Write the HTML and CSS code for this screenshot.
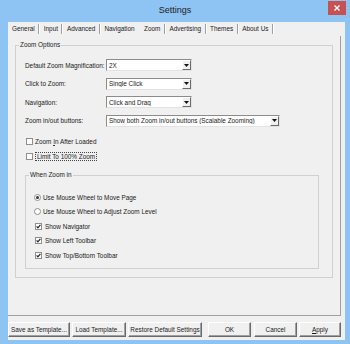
FILE: index.html
```html
<!DOCTYPE html>
<html lang="en">
<head>
  <meta charset="UTF-8">
  <title>Settings</title>
  <link rel="stylesheet" href="styles.css">
</head>
<body>
  <div class="window">
    <div class="titlebar">
      <span class="title">Settings</span>
      <span class="close">
        <svg width="6" height="6" viewBox="0 0 6 6"><path d="M0.5 0.5 L5.5 5.5 M5.5 0.5 L0.5 5.5" stroke="#fff" stroke-width="1.4"/></svg>
      </span>
    </div>

    <div class="client">
      <div class="tabs">
        <span class="tab">General</span><span class="sep"></span>
        <span class="tab">Input</span><span class="sep"></span>
        <span class="tab">Advanced</span><span class="sep"></span>
        <span class="tab">Navigation</span>
        <span class="tab active">Zoom</span><span class="sep"></span>
        <span class="tab">Advertising</span><span class="sep"></span>
        <span class="tab">Themes</span><span class="sep"></span>
        <span class="tab">About Us</span><span class="sep"></span>
      </div>

      <div class="panel">
        <fieldset class="group outer">
          <legend>Zoom Options</legend>

          <div class="field">
            <span class="field-label">Default Zoom Magnification:</span>
            <div class="combo"><span class="combo-value">2X</span><span class="combo-drop"><svg width="5" height="3" viewBox="0 0 5 3"><polygon points="0,0 5,0 2.5,3" fill="#111"/></svg></span></div>
          </div>
          <div class="field">
            <span class="field-label">Click to Zoom:</span>
            <div class="combo"><span class="combo-value">Single Click</span><span class="combo-drop"><svg width="5" height="3" viewBox="0 0 5 3"><polygon points="0,0 5,0 2.5,3" fill="#111"/></svg></span></div>
          </div>
          <div class="field">
            <span class="field-label">Navigation:</span>
            <div class="combo"><span class="combo-value">Click and Drag</span><span class="combo-drop"><svg width="5" height="3" viewBox="0 0 5 3"><polygon points="0,0 5,0 2.5,3" fill="#111"/></svg></span></div>
          </div>
          <div class="field">
            <span class="field-label">Zoom in/out buttons:</span>
            <div class="combo wide"><span class="combo-value">Show both Zoom in/out buttons (Scalable Zooming)</span><span class="combo-drop"><svg width="5" height="3" viewBox="0 0 5 3"><polygon points="0,0 5,0 2.5,3" fill="#111"/></svg></span></div>
          </div>

          <div class="checks">
            <div class="option"><span class="box"></span><span>Zoom <u>I</u>n After Loaded</span></div>
            <div class="option"><span class="box"></span><span class="focus">Limit To 100% Zoom</span></div>
          </div>

          <fieldset class="group inner">
            <legend>When Zoom in</legend>
            <div class="option"><span class="radio checked"></span><span>Use Mouse Wheel to Move Page</span></div>
            <div class="option"><span class="radio"></span><span>Use Mouse Wheel to Adjust Zoom Level</span></div>
            <div class="option"><span class="box"><svg width="5" height="5" viewBox="0 0 5 5"><path d="M0.6 2.4 L1.9 3.9 L4.4 0.9" stroke="#222" stroke-width="1.2" fill="none"/></svg></span><span>Show Navigator</span></div>
            <div class="option"><span class="box"><svg width="5" height="5" viewBox="0 0 5 5"><path d="M0.6 2.4 L1.9 3.9 L4.4 0.9" stroke="#222" stroke-width="1.2" fill="none"/></svg></span><span>Show Left Toolbar</span></div>
            <div class="option"><span class="box"><svg width="5" height="5" viewBox="0 0 5 5"><path d="M0.6 2.4 L1.9 3.9 L4.4 0.9" stroke="#222" stroke-width="1.2" fill="none"/></svg></span><span>Show Top/Bottom Toolbar</span></div>
          </fieldset>
        </fieldset>
      </div>

      <div class="buttons">
        <button class="btn save">Save as Template...</button>
        <button class="btn load">Load Template...</button>
        <button class="btn restore">Restore Default Settings</button>
        <button class="btn ok">OK</button>
        <button class="btn cancel">Cancel</button>
        <button class="btn apply"><span><u>A</u>pply</span></button>
      </div>
    </div>
  </div>
</body>
</html>
```

FILE: styles.css
```css
body {
  margin: 0;
  background: #8dc4f3;
  font-family: "Liberation Sans", Arial, sans-serif;
  font-size: 6.4px;
  color: #1a1a1a;
}

.window {
  width: 350px;
  height: 344px;
  display: flex;
  flex-direction: column;
}

.titlebar {
  height: 22px;
  position: relative;
  display: flex;
  align-items: center;
  justify-content: center;
}

.title {
  font-size: 9px;
  color: #222;
  margin-top: -3px;
}

.close {
  position: absolute;
  top: 1px;
  right: 4px;
  width: 18px;
  height: 14px;
  background: #c75050;
  display: flex;
  align-items: center;
  justify-content: center;
}

.client {
  margin-left: 8px;
  width: 337px;
  height: 318px;
  background: #f0f0f0;
}

/* tab strip */
.tabs {
  height: 14px;
  display: flex;
  align-items: center;
  padding-left: 0.5px;
}

.tab {
  padding: 0 3.5px;
  line-height: 10px;
  white-space: nowrap;
}

.tab.active {
  padding: 0 3.5px 0 6px;
}

.sep {
  width: 0;
  height: 10px;
  border-left: 1px solid #a0a0a0;
  border-right: 1px solid #fff;
}

/* page */
.panel {
  box-sizing: border-box;
  width: 333px;
  height: 280px;
  padding: 5px 7px 0 7px;
  border-right: 1px solid #a0a0a0;
  border-bottom: 1px solid #a0a0a0;
}

.group {
  margin: 0;
  min-width: 0;
  border: 1px solid #d0d0d0;
}

.group legend {
  padding: 0 1px;
  height: 8px;
  line-height: 8px;
}

.outer {
  padding: 10px 13px 8px 9px;
}

.outer > legend {
  margin-left: -6px;
}

.inner {
  margin-top: 9.5px;
  padding: 13px 8px 8px 8px;
}

.inner > legend {
  margin-left: -5px;
}

.field {
  display: flex;
  align-items: center;
  height: 12px;
}

.field + .field {
  margin-top: 6.5px;
}

.field-label {
  width: 81px;
  white-space: nowrap;
}

.combo {
  box-sizing: border-box;
  width: 86px;
  height: 12px;
  display: flex;
  align-items: center;
  background: #fff;
  border: 1px solid;
  border-color: #8c8c8c #e3e3e3 #e3e3e3 #8c8c8c;
}

.combo.wide {
  width: 174px;
}

.combo-value {
  flex: 1;
  padding-left: 2px;
  white-space: nowrap;
  overflow: hidden;
}

.combo-drop {
  box-sizing: border-box;
  width: 9px;
  height: 10px;
  display: flex;
  align-items: center;
  justify-content: center;
  background: #f0f0f0;
  border: 1px solid;
  border-color: #fff #6a6a6a #6a6a6a #fff;
}

.checks {
  margin-top: 10px;
}

.option {
  display: flex;
  align-items: center;
  height: 10px;
  white-space: nowrap;
}

.checks .option + .option {
  margin-top: 5px;
}

.inner .option + .option {
  margin-top: 4.5px;
}

.box {
  box-sizing: border-box;
  width: 7px;
  height: 7px;
  margin: 0 2px 0 1px;
  background: #fff;
  border: 1px solid #8e8f8f;
  display: flex;
  align-items: center;
  justify-content: center;
}

.inner .box {
  margin-right: 3px;
}

.radio {
  box-sizing: border-box;
  width: 7px;
  height: 7px;
  margin-right: 2px;
  border-radius: 50%;
  background: #fff;
  border: 1px solid #8e8f8f;
  display: flex;
  align-items: center;
  justify-content: center;
}

.radio.checked::after {
  content: "";
  width: 3px;
  height: 3px;
  border-radius: 50%;
  background: #333;
}

.focus {
  outline: 1px dotted #444;
  outline-offset: 0;
  padding: 0 1px;
  margin-left: 1px;
}

/* bottom buttons */
.buttons {
  display: flex;
  margin-top: 6px;
  height: 15px;
}

.btn {
  box-sizing: border-box;
  height: 15px;
  padding: 0;
  font: inherit;
  color: inherit;
  background: #f0f0f0;
  border: 1px solid;
  border-color: #fff #6a6a6a #6a6a6a #fff;
  box-shadow: inset -1px -1px 0 #a0a0a0;
  white-space: nowrap;
}

.save { width: 62px; }
.load { width: 54px; margin-left: 2px; }
.restore { width: 74px; margin-left: 2px; }
.ok { width: 43px; margin-left: 6px; }
.cancel { width: 43px; margin-left: 3px; }
.apply { width: 42px; margin-left: 2px; }
```
